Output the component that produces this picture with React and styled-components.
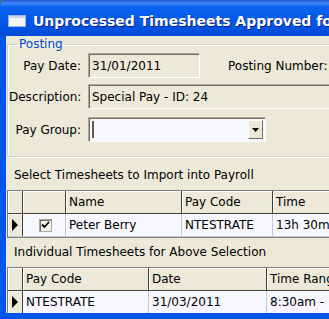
import React from "react";
import styled, { createGlobalStyle } from "styled-components";

const Global = createGlobalStyle`
  html, body { margin: 0; padding: 0; overflow: hidden; background: #3a6ea5; }
  body { width: 329px; height: 319px; }
`;

const Frame = styled.div`
  width: 440px;
  height: 319px;
  display: flex;
  flex-direction: column;
  background: #0055ea;
  border-radius: 7px 7px 0 0;
  font-family: "DejaVu Sans", Tahoma, sans-serif;
  font-size: 12px;
  color: #000;
`;

const TitleBar = styled.div`
  flex: none;
  height: 36px;
  box-sizing: border-box;
  display: flex;
  align-items: center;
  gap: 7px;
  padding: 5px 0 0 8px;
  border-radius: 7px 7px 0 0;
  background: linear-gradient(#1f4fc9 0px, #3d8cfa 3px, #0a62f0 7px, #0055e5 26px, #0049d6 36px);
  color: #fff;
  font-weight: bold;
  font-size: 14px;
  white-space: nowrap;
  text-shadow: 1px 1px #0a1e80;
`;

const Body = styled.div`
  flex: 1;
  min-height: 0;
  margin: 0 0 6px 6px;
  padding: 0 0 0 1px;
  background: #ece9d8;
  display: flex;
  flex-direction: column;
  overflow: hidden;
  & > * { flex: none; }
`;

const Group = styled.fieldset`
  margin: 1px 0 0 0;
  padding: 2px 0 14px 1px;
  border: 1px solid #d0d0bf;
  border-right: none;
  box-shadow: inset 1px 1px #fff, 0 1px #fff;
  display: flex;
  flex-direction: column;
  gap: 6px;
`;

const Legend = styled.legend`
  margin-left: 8px;
  padding: 0 2px;
  color: #0046d5;
  line-height: 14px;
`;

const Row = styled.div`
  display: flex;
  align-items: center;
  height: 25px;
  margin-top: ${(p) => p.$top || 0}px;
`;

const Label = styled.span`
  width: 72px;
  margin-right: 7px;
  text-align: right;
  white-space: nowrap;
`;

const Field = styled.div`
  box-sizing: border-box;
  height: 25px;
  width: ${(p) => p.$w}px;
  display: flex;
  align-items: center;
  padding-left: 3px;
  background: ${(p) => (p.$white ? "#f7f7ff" : "#ece9d8")};
  border: 1px solid;
  border-color: #aca899 #fff #fff #aca899;
  box-shadow: inset 1px 1px #716f64;
  white-space: nowrap;
`;

const Caret = styled.span`
  width: 2px;
  height: 17px;
  background: #5c5c50;
`;

const DropButton = styled.div`
  margin-left: auto;
  margin-right: 2px;
  width: 15px;
  height: 19px;
  box-sizing: border-box;
  background: #ece9d8;
  border: 1px solid;
  border-color: #fff #716f64 #716f64 #fff;
  display: flex;
  align-items: center;
  justify-content: center;
`;

const SideLabel = styled.span`
  margin-left: 28px;
  white-space: nowrap;
`;

const Caption = styled.div`
  box-sizing: border-box;
  padding: 0 0 8px 7px;
  height: ${(p) => p.$h}px;
  display: flex;
  align-items: flex-end;
  line-height: 14px;
  white-space: nowrap;
`;

const Grid = styled.div`
  border: 1px solid #7f7f7f;
  border-right: none;
  display: flex;
  flex-direction: column;
`;

const GridRow = styled.div`
  display: flex;
  height: 22px;
  background: ${(p) => (p.$head ? "#ece9d8" : "#f7f7ff")};
  border-bottom: 1px solid ${(p) => (p.$head ? "#404040" : "#c8c8c8")};
`;

const Cell = styled.div`
  box-sizing: border-box;
  width: ${(p) => p.$w}px;
  flex: ${(p) => (p.$w ? "none" : 1)};
  display: flex;
  align-items: center;
  justify-content: ${(p) => (p.$center ? "center" : "flex-start")};
  padding-left: 3px;
  white-space: nowrap;
  border-right: 1px solid ${(p) => (p.$head ? "#404040" : "#c8c8c8")};
  box-shadow: ${(p) => (p.$head ? "inset 1px 1px #fff" : "none")};
`;

const Selector = styled.div`
  box-sizing: border-box;
  width: 15px;
  flex: none;
  background: #ece9d8;
  border-right: 1px solid #404040;
  box-shadow: inset 1px 1px #fff;
  display: flex;
  align-items: center;
  justify-content: center;
`;

const Check = styled.div`
  width: 13px;
  height: 13px;
  box-sizing: border-box;
  border: 1px solid #aca899;
  box-shadow: inset 1px 1px #716f64;
  background: #f4f3ee;
  display: flex;
  align-items: center;
  justify-content: center;
`;

const Arrow = () => (
  <svg width="7" height="12" viewBox="0 0 7 12">
    <polygon points="0,0 6,6 0,12" fill="#000" />
  </svg>
);

const WindowIcon = () => (
  <svg width="18" height="12" viewBox="0 0 18 12">
    <rect x="0.5" y="0.5" width="17" height="11" fill="#f4f6fc" stroke="#9db3e8" />
    <rect x="1" y="1" width="16" height="2" fill="#c8d6f6" />
  </svg>
);

const Grid1 = [
  { w: 43, label: "" },
  { w: 116, label: "Name" },
  { w: 91, label: "Pay Code" },
  { label: "Time" },
];

const Grid2 = [
  { w: 126, label: "Pay Code" },
  { w: 118, label: "Date" },
  { label: "Time Range" },
];

const App = () => (
  <>
    <Global />
    <Frame>
      <TitleBar>
        <WindowIcon />
        Unprocessed Timesheets Approved for Payroll
      </TitleBar>
      <Body>
        <Group>
          <Legend>Posting</Legend>
          <Row>
            <Label>Pay Date:</Label>
            <Field $w={112}>31/01/2011</Field>
            <SideLabel>Posting Number:</SideLabel>
          </Row>
          <Row>
            <Label>Description:</Label>
            <Field $w={340}>Special Pay - ID: 24</Field>
          </Row>
          <Row $top={2}>
            <Label>Pay Group:</Label>
            <Field $w={178} $white>
              <Caret />
              <DropButton>
                <svg width="7" height="4" viewBox="0 0 7 4">
                  <polygon points="0,0 7,0 3.5,4" fill="#000" />
                </svg>
              </DropButton>
            </Field>
          </Row>
        </Group>
        <Caption $h={33}>Select Timesheets to Import into Payroll</Caption>
        <Grid>
          <GridRow $head>
            <Selector />
            {Grid1.map((c) => (
              <Cell key={c.label || "chk"} $w={c.w} $head>
                {c.label}
              </Cell>
            ))}
          </GridRow>
          <GridRow>
            <Selector>
              <Arrow />
            </Selector>
            <Cell $w={43} $center>
              <Check>
                <svg width="9" height="8" viewBox="0 0 9 8">
                  <polyline points="1,3.5 3.5,6 8,1" fill="none" stroke="#000" strokeWidth="1.8" />
                </svg>
              </Check>
            </Cell>
            <Cell $w={116}>Peter Berry</Cell>
            <Cell $w={91}>NTESTRATE</Cell>
            <Cell>13h 30m</Cell>
          </GridRow>
        </Grid>
        <Caption $h={29}>Individual Timesheets for Above Selection</Caption>
        <Grid>
          <GridRow $head>
            <Selector />
            {Grid2.map((c) => (
              <Cell key={c.label} $w={c.w} $head>
                {c.label}
              </Cell>
            ))}
          </GridRow>
          <GridRow>
            <Selector>
              <Arrow />
            </Selector>
            <Cell $w={126}>NTESTRATE</Cell>
            <Cell $w={118}>31/03/2011</Cell>
            <Cell>8:30am - 12:00pm</Cell>
          </GridRow>
        </Grid>
      </Body>
    </Frame>
  </>
);

export default App;
